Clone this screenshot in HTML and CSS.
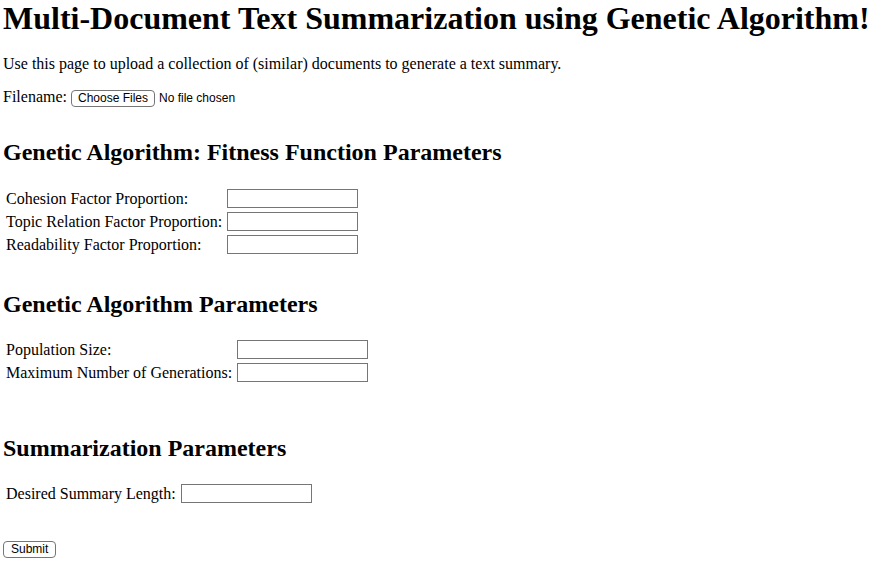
FILE: index.html
```html
<!DOCTYPE html>
<html>
<head>
<meta charset="utf-8">
<title>Multi-Document Text Summarization</title>
<link rel="stylesheet" href="styles.css">
</head>
<body class="page">
<h1 class="title">Multi-Document Text Summarization using Genetic Algorithm!</h1>
<p class="intro">Use this page to upload a collection of (similar) documents to generate a text summary.</p>
<form class="form">
<div class="file-row">Filename: <label class="file-btn">Choose Files</label> <span class="file-status">No file chosen</span></div>
<h2 class="section section-first">Genetic Algorithm: Fitness Function Parameters</h2>
<table class="params">
<tr><td>Cohesion Factor Proportion:</td><td><input class="field" type="text"></td></tr>
<tr><td>Topic Relation Factor Proportion:</td><td><input class="field" type="text"></td></tr>
<tr><td>Readability Factor Proportion:</td><td><input class="field" type="text"></td></tr>
</table>
<h2 class="section">Genetic Algorithm Parameters</h2>
<table class="params">
<tr><td>Population Size:</td><td><input class="field" type="text"></td></tr>
<tr><td>Maximum Number of Generations:</td><td><input class="field" type="text"></td></tr>
</table>
<h2 class="section section-gap">Summarization Parameters</h2>
<table class="params">
<tr><td>Desired Summary Length:</td><td><input class="field" type="text"></td></tr>
</table>
<div class="submit-row"><button class="btn" type="button">Submit</button></div>
</form>
</body>
</html>
```
FILE: styles.css
```css
html, body { background: #fff; }
.page {
  margin: 0 3px;
  font-family: "Liberation Serif", "Times New Roman", serif;
  font-size: 16px;
  color: #000;
}
.title {
  font-size: 32px;
  font-weight: bold;
  margin: 0 0 18px;
}
.intro { margin: 16px 0 15px; }
.file-row { margin: 0; }
.file-btn, .btn {
  display: inline-block;
  font-family: "Liberation Sans", Arial, sans-serif;
  font-size: 12px;
  line-height: 13px;
  padding: 1px 7px;
  border: 1px solid #767676;
  border-radius: 4px;
  background: #fff;
  color: #000;
}
.file-btn { padding: 1px 6px; }
.file-status {
  font-family: "Liberation Sans", Arial, sans-serif;
  font-size: 12px;
}
.section {
  font-size: 24px;
  font-weight: bold;
  margin: 34px 0 19px;
}
.section-first { margin: 32px 0 20px; }
.section-gap { margin-top: 50px; }
.params { border-spacing: 2px; }
.params td { padding: 1px; }
.field {
  width: 127px;
  height: 15px;
  padding: 1px;
  border: 1px solid #767676;
  margin: 0 0 0 1px;
  font-size: 13px;
}
.submit-row { margin-top: 33px; }
```
